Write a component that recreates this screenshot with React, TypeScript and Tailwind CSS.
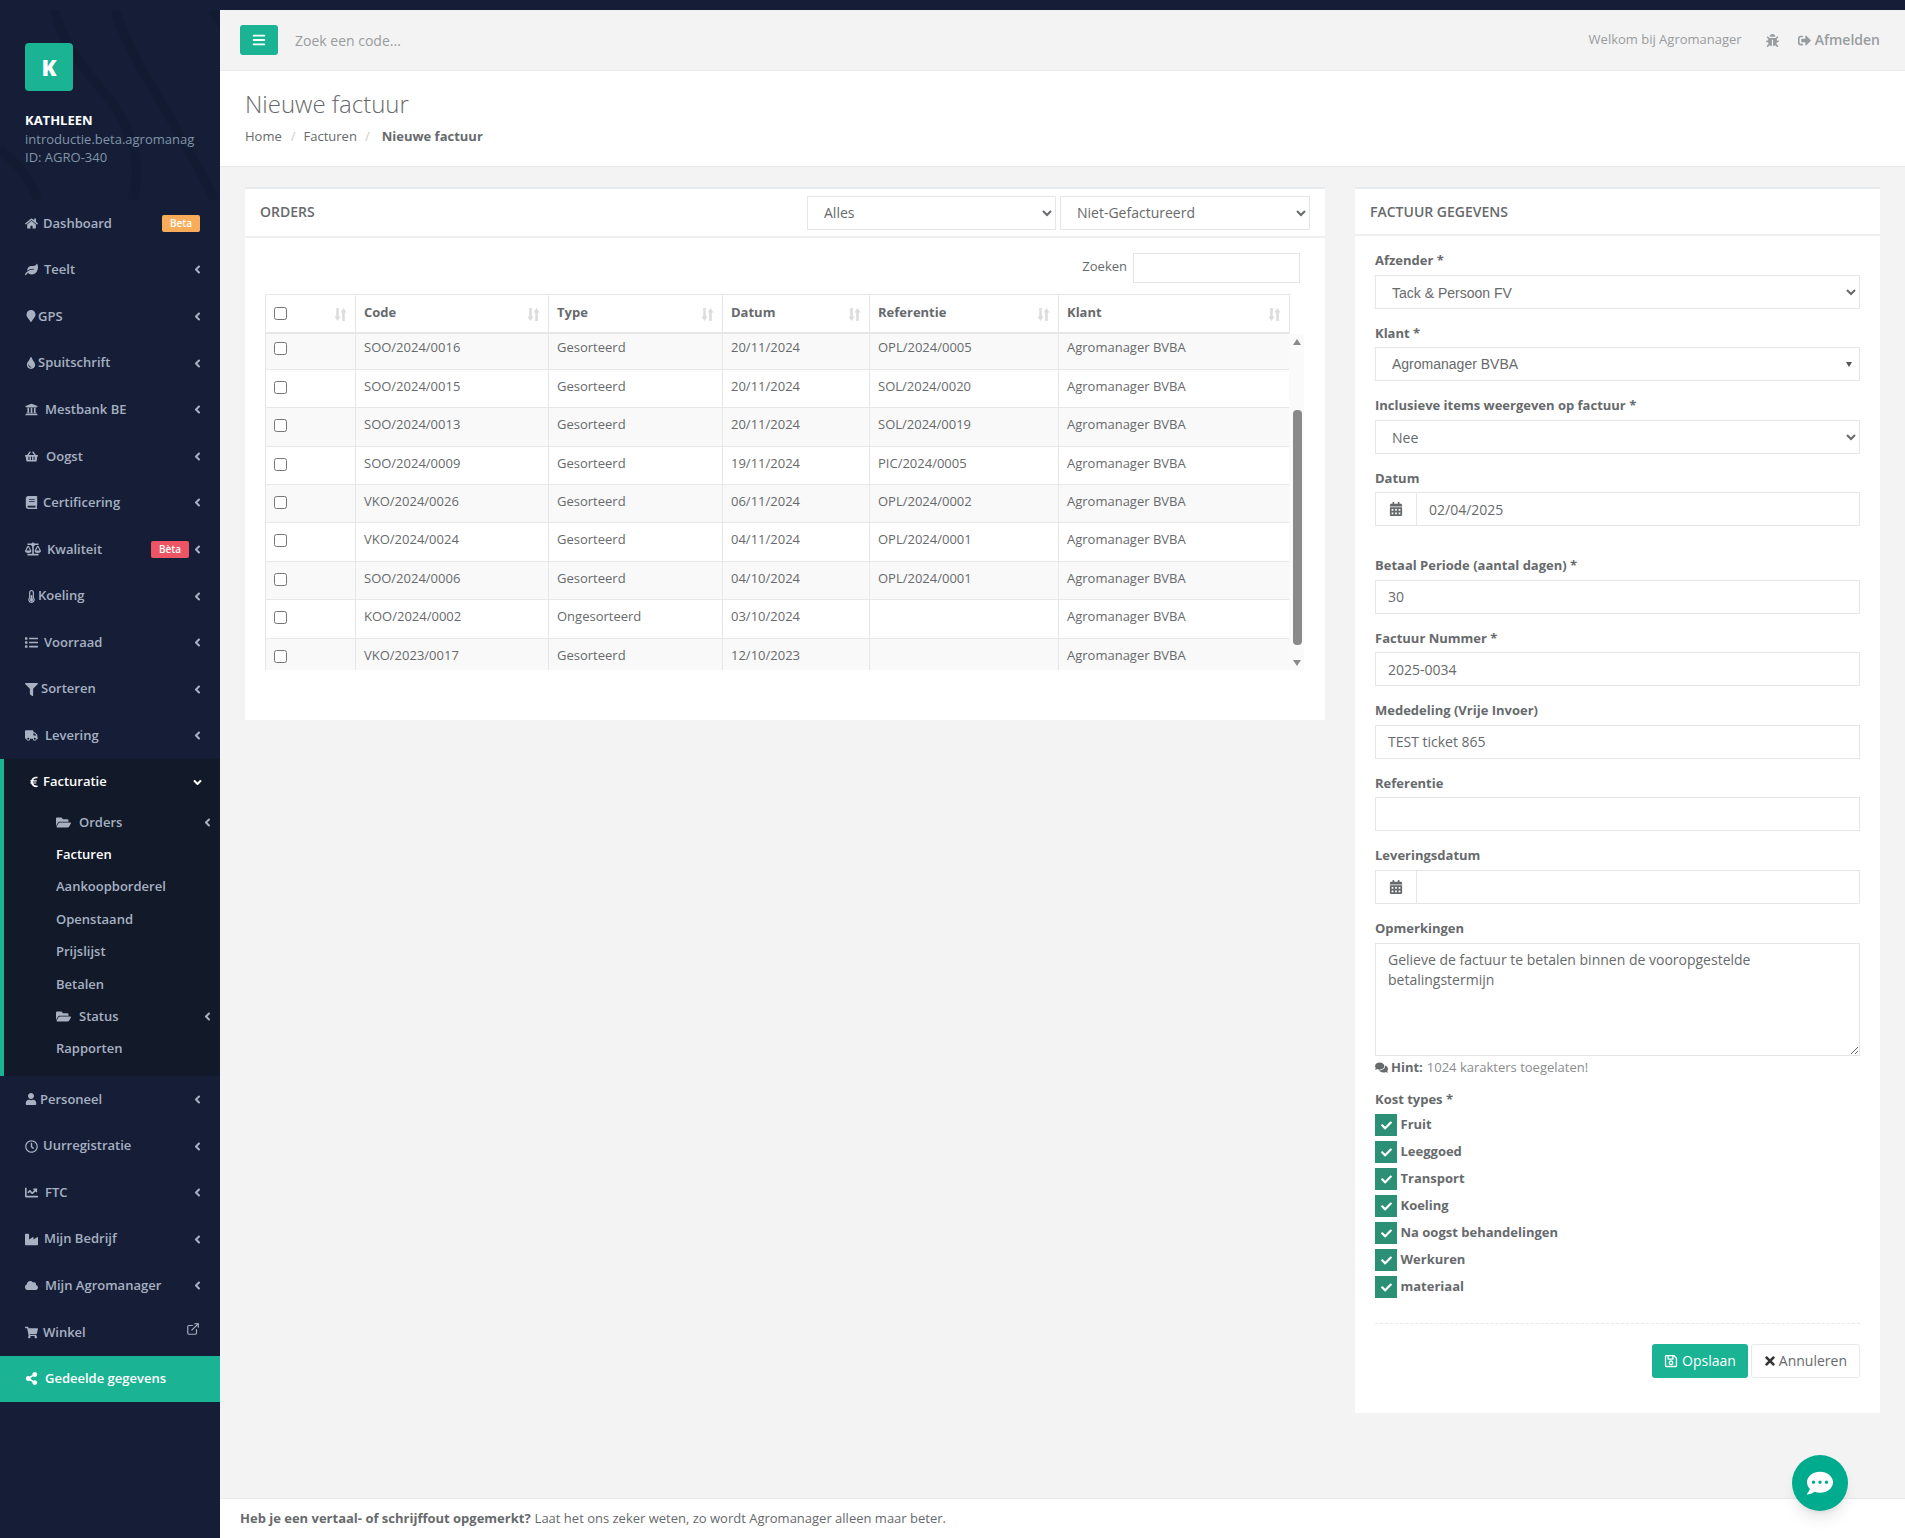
import type { ReactNode } from 'react'
import {
  FaAngleDown,
  FaAngleLeft,
  FaBalanceScale,
  FaBars,
  FaBook,
  FaBug,
  FaCalendarAlt,
  FaCheck,
  FaChartLine,
  FaCloud,
  FaCommentDots,
  FaComments,
  FaEuroSign,
  FaFilter,
  FaFolderOpen,
  FaHome,
  FaIndustry,
  FaLeaf,
  FaList,
  FaMapMarker,
  FaRegClock,
  FaRegSave,
  FaShareAlt,
  FaShoppingBasket,
  FaShoppingCart,
  FaSignOutAlt,
  FaThermometerHalf,
  FaTimes,
  FaTint,
  FaTruck,
  FaUniversity,
  FaUser,
} from 'react-icons/fa'
import { FiExternalLink } from 'react-icons/fi'

// slot = room for the icon, the labels in the menu do not line up
const menuTop = [
  { label: 'Teelt', slot: 'w-[19px]', icon: <FaLeaf /> },
  { label: 'GPS', slot: 'w-[13px]', icon: <FaMapMarker className="text-[12px]" /> },
  { label: 'Spuitschrift', slot: 'w-[13px]', icon: <FaTint className="text-[12px]" /> },
  { label: 'Mestbank BE', slot: 'w-[20px]', icon: <FaUniversity /> },
  { label: 'Oogst', slot: 'w-[21px]', icon: <FaShoppingBasket /> },
  { label: 'Certificering', slot: 'w-[18px]', icon: <FaBook /> },
]

const menuMid = [
  { label: 'Koeling', slot: 'w-[13px]', icon: <FaThermometerHalf /> },
  { label: 'Voorraad', slot: 'w-[19px]', icon: <FaList /> },
  { label: 'Sorteren', slot: 'w-[16px]', icon: <FaFilter /> },
  { label: 'Levering', slot: 'w-[20px]', icon: <FaTruck /> },
]

const menuBottom = [
  { label: 'Personeel', slot: 'w-[15px]', icon: <FaUser className="text-[12px]" /> },
  { label: 'Uurregistratie', slot: 'w-[18px]', icon: <FaRegClock /> },
  { label: 'FTC', slot: 'w-[20px]', icon: <FaChartLine /> },
  { label: 'Mijn Bedrijf', slot: 'w-[19px]', icon: <FaIndustry /> },
  { label: 'Mijn Agromanager', slot: 'w-[20px]', icon: <FaCloud /> },
]

const orders = [
  ['SOO/2024/0016', 'Gesorteerd', '20/11/2024', 'OPL/2024/0005'],
  ['SOO/2024/0015', 'Gesorteerd', '20/11/2024', 'SOL/2024/0020'],
  ['SOO/2024/0013', 'Gesorteerd', '20/11/2024', 'SOL/2024/0019'],
  ['SOO/2024/0009', 'Gesorteerd', '19/11/2024', 'PIC/2024/0005'],
  ['VKO/2024/0026', 'Gesorteerd', '06/11/2024', 'OPL/2024/0002'],
  ['VKO/2024/0024', 'Gesorteerd', '04/11/2024', 'OPL/2024/0001'],
  ['SOO/2024/0006', 'Gesorteerd', '04/10/2024', 'OPL/2024/0001'],
  ['KOO/2024/0002', 'Ongesorteerd', '03/10/2024', ''],
  ['VKO/2023/0017', 'Gesorteerd', '12/10/2023', ''],
]

const kostTypes = ['Fruit', 'Leeggoed', 'Transport', 'Koeling', 'Na oogst behandelingen', 'Werkuren', 'materiaal']

function NavItem({ icon, label, slot, badge, noAngle }: { icon: ReactNode; label: string; slot: string; badge?: ReactNode; noAngle?: boolean }) {
  return (
    <div className="flex h-[46.6px] items-center pl-[25px] pr-[16px] text-[13px] font-semibold text-[#a7b1c2]">
      <span className={`${slot} shrink-0 text-[13px]`}>{icon}</span>
      <span>{label}</span>
      {badge}
      {!noAngle && <FaAngleLeft className={`${badge ? 'ml-[2px]' : 'ml-auto'} text-[13px]`} />}
    </div>
  )
}

function SubItem({ label, folder, active }: { label: string; folder?: boolean; active?: boolean }) {
  return (
    <div className={`flex h-[32.4px] items-center pl-[52px] pr-[6px] text-[13px] font-semibold ${active ? 'text-white' : 'text-[#a7b1c2]'}`}>
      {folder && <FaFolderOpen className="mr-[8px] text-[15px]" />}
      <span>{label}</span>
      {folder && <FaAngleLeft className="ml-auto text-[13px]" />}
    </div>
  )
}

function Sidebar() {
  return (
    <aside className="w-[220px] shrink-0 bg-[#161e37]">
      <div className="relative h-[200px] overflow-hidden pl-[25px] pt-[43px]">
        <svg className="absolute left-0 top-[10px] h-[190px] w-[220px]" viewBox="0 0 220 190" fill="none" stroke="#131b33" strokeWidth="9">
          <path d="M55 0 C 65 50, 110 80, 125 115 C 140 150, 138 170, 132 190" />
          <path d="M115 0 C 130 50, 170 100, 215 190" />
          <path d="M212 0 L 225 18" />
          <path d="M0 140 C 20 155, 30 170, 38 190" />
        </svg>
        <div className="relative">
          <div className="flex h-[48px] w-[48px] items-center justify-center rounded-[4px] bg-[#1ab394] text-[22px] font-extrabold text-white">K</div>
          <div className="mt-[20px] text-[13px] font-bold leading-[19px] text-white">KATHLEEN</div>
          <div className="whitespace-nowrap text-[13px] leading-[18px] text-[#8095a8]">introductie.beta.agromanag</div>
          <div className="text-[13px] leading-[18px] text-[#8095a8]">ID: AGRO-340</div>
        </div>
      </div>
      <NavItem
        icon={<FaHome />}
        slot="w-[18px]"
        label="Dashboard"
        noAngle
        badge={<span className="ml-auto mr-[4px] rounded-[2px] bg-[#f8ac59] px-[8px] py-[1px] text-[10px] font-semibold text-white">Beta</span>}
      />
      {menuTop.map((item) => (
        <NavItem key={item.label} icon={item.icon} slot={item.slot} label={item.label} />
      ))}
      <NavItem
        icon={<FaBalanceScale className="text-[16px]" />}
        slot="w-[22px]"
        label="Kwaliteit"
        badge={<span className="ml-auto rounded-[2px] bg-[#ed5565] px-[8px] py-[1px] text-[10px] font-semibold text-white">Bèta</span>}
      />
      {menuMid.map((item) => (
        <NavItem key={item.label} icon={item.icon} slot={item.slot} label={item.label} />
      ))}
      {/* Facturatie block, open */}
      <div className="h-[317px] border-l-4 border-[#1ab394] bg-[#121929]">
        <div className="flex h-[46px] items-center pl-[24px] pr-[16px] text-[13px] font-semibold text-white">
          <span className="w-[15px] shrink-0">
            <FaEuroSign className="text-[12px]" />
          </span>
          <span>Facturatie</span>
          <FaAngleDown className="ml-auto text-[13px]" />
        </div>
        <div className="pt-[1px]">
          <SubItem label="Orders" folder />
          <SubItem label="Facturen" active />
          <SubItem label="Aankoopborderel" />
          <SubItem label="Openstaand" />
          <SubItem label="Prijslijst" />
          <SubItem label="Betalen" />
          <SubItem label="Status" folder />
          <SubItem label="Rapporten" />
        </div>
      </div>
      {menuBottom.map((item) => (
        <NavItem key={item.label} icon={item.icon} slot={item.slot} label={item.label} />
      ))}
      <div className="flex h-[46.6px] items-center pl-[25px] pr-[20px] text-[13px] font-semibold text-[#a7b1c2]">
        <FaShoppingCart className="mr-[5px]" />
        <span>Winkel</span>
        <FiExternalLink className="mb-[6px] ml-auto text-[14px]" />
      </div>
      <div className="flex h-[46px] items-center bg-[#1ab394] pl-[25px] text-[13px] font-semibold text-white">
        <span className="w-[20px] shrink-0">
          <FaShareAlt />
        </span>
        <span>Gedeelde gegevens</span>
      </div>
    </aside>
  )
}

function SortIcon() {
  return (
    <svg className="ml-auto mt-[2px] shrink-0" width="13" height="15" viewBox="0 0 13 15" fill="#dcdcdc">
      <path d="M2.2 1h2.6v8.5h1.7L3.5 14 .5 9.5h1.7z" />
      <path d="M8.2 14h2.6V5.5h1.7L9.5 1 6.5 5.5h1.7z" />
    </svg>
  )
}

function OrdersCard() {
  const headers = ['Code', 'Type', 'Datum', 'Referentie', 'Klant']
  const colWidths = ['w-[193px]', 'w-[174px]', 'w-[147px]', 'w-[189px]', 'w-[231px]']

  return (
    <section className="h-[533px] w-[1080px] shrink-0 border-t-2 border-[#e7eaec] bg-white">
      <div className="flex h-[49px] items-center border-b-2 border-[#eef0f2] pl-[15px] pr-[15px]">
        <h2 className="mb-[2px] text-[14px] font-semibold text-[#676a6c]">ORDERS</h2>
        <div className="ml-auto flex gap-[4px]">
          <select className="h-[34px] w-[249px] border border-[#e5e6e7] bg-white px-[12px] text-[14px] text-[#676a6c]">
            <option>Alles</option>
          </select>
          <select className="h-[34px] w-[250px] border border-[#e5e6e7] bg-white px-[12px] text-[14px] text-[#676a6c]">
            <option>Niet-Gefactureerd</option>
          </select>
        </div>
      </div>
      <div className="flex items-center justify-end pr-[25px] pt-[15px]">
        <span className="mb-[3px] mr-[6px] text-[13px] text-[#676a6c]">Zoeken</span>
        <input className="h-[30px] w-[167px] border border-[#e5e6e7] bg-white" />
      </div>
      <div className="ml-[20px] mt-[11px] w-[1039px]">
        <table className="w-[1024px] table-fixed border-collapse text-[13px] text-[#676a6c]">
          <thead>
            <tr className="h-[38px]">
              <th className="w-[90px] border border-[#e7e7e7] border-b-2 px-[8px]">
                <div className="flex items-center">
                  <input type="checkbox" className="h-[13px] w-[13px]" />
                  <SortIcon />
                </div>
              </th>
              {headers.map((header, i) => (
                <th key={header} className={`${colWidths[i]} border border-[#e7e7e7] border-b-2 px-[8px] text-left font-bold`}>
                  <div className="flex items-center">
                    <span className="mb-[2px]">{header}</span>
                    <SortIcon />
                  </div>
                </th>
              ))}
            </tr>
          </thead>
        </table>
        <div className="relative h-[336px] overflow-hidden">
          <table className="-mt-[3px] w-[1024px] table-fixed border-collapse text-[13px] text-[#676a6c]">
            <tbody>
              {orders.map((row, r) => (
                <tr key={row[0]} className={`h-[38.4px] ${r % 2 === 0 ? 'bg-[#f9f9f9]' : 'bg-white'}`}>
                  <td className="w-[90px] border border-[#e7e7e7] px-[8px]">
                    <input type="checkbox" className="mt-[3px] h-[13px] w-[13px]" />
                  </td>
                  <td className="w-[193px] border border-[#e7e7e7] px-[8px] pb-[4px]">{row[0]}</td>
                  <td className="w-[174px] border border-[#e7e7e7] px-[8px] pb-[4px]">{row[1]}</td>
                  <td className="w-[147px] border border-[#e7e7e7] px-[8px] pb-[4px]">{row[2]}</td>
                  <td className="w-[189px] border border-[#e7e7e7] px-[8px] pb-[4px]">{row[3]}</td>
                  <td className="w-[231px] border border-[#e7e7e7] px-[8px] pb-[4px]">Agromanager BVBA</td>
                </tr>
              ))}
            </tbody>
          </table>
          {/* scrollbar of the table body */}
          <div className="absolute right-0 top-0 h-[336px] w-[15px] bg-[#fafafa]">
            <div className="absolute left-[4px] top-[5px] h-0 w-0 border-x-[4.5px] border-b-[6px] border-x-transparent border-b-[#8a8a8a]" />
            <div className="absolute left-[4px] top-[76px] h-[235px] w-[9px] rounded-[4px] bg-[#8a8a8a]" />
            <div className="absolute bottom-[4px] left-[4px] h-0 w-0 border-x-[4.5px] border-t-[6px] border-x-transparent border-t-[#8a8a8a]" />
          </div>
        </div>
      </div>
    </section>
  )
}

function Field({ label, children, className = '' }: { label: string; children: ReactNode; className?: string }) {
  return (
    <div className={`mb-[15px] ${className}`}>
      <label className="mb-[5px] block text-[13px] font-bold leading-[18.5px] text-[#676a6c]">{label}</label>
      {children}
    </div>
  )
}

function TextInput({ value }: { value: string }) {
  return <input readOnly value={value} className="block h-[34px] w-full border border-[#e5e6e7] bg-white px-[12px] text-[14px] text-[#676a6c]" />
}

function DateInput({ value }: { value: string }) {
  return (
    <div className="flex h-[34px] border border-[#e5e6e7] bg-white">
      <span className="flex w-[41px] items-center justify-center border-r border-[#e5e6e7] text-[14px] text-[#676a6c]">
        <FaCalendarAlt />
      </span>
      <input readOnly value={value} className="min-w-0 flex-1 px-[12px] text-[14px] text-[#676a6c]" />
    </div>
  )
}

function FormCard() {
  return (
    <section className="h-[1226px] w-[525px] shrink-0 border-t-2 border-[#e7eaec] bg-white">
      <div className="flex h-[47px] items-center border-b-2 border-[#eef0f2] pl-[15px]">
        <h2 className="text-[14px] font-semibold text-[#676a6c]">FACTUUR GEGEVENS</h2>
      </div>
      <div className="px-[20px] pt-[15px]">
        <Field label="Afzender *">
          <select className="block h-[34px] w-full border border-[#e5e6e7] bg-white px-[12px] pt-[2px] font-['Liberation_Sans',sans-serif] text-[14px] text-[#676a6c]">
            <option>Tack &amp; Persoon FV</option>
          </select>
        </Field>
        <Field label="Klant *">
          <div className="flex h-[34px] items-center border border-[#e5e6e7] bg-white pl-[16px] pr-[7px] font-['Liberation_Sans',sans-serif] text-[14px] text-[#676a6c]">
            Agromanager BVBA
            <span className="ml-auto h-0 w-0 border-x-[3.5px] border-t-[5px] border-x-transparent border-t-[#555]" />
          </div>
        </Field>
        <Field label="Inclusieve items weergeven op factuur *">
          <select className="block h-[34px] w-full border border-[#e5e6e7] bg-white px-[12px] pt-[2px] text-[14px] text-[#676a6c]">
            <option>Nee</option>
          </select>
        </Field>
        <Field label="Datum" className="!mb-[30px]">
          <DateInput value="02/04/2025" />
        </Field>
        <Field label="Betaal Periode (aantal dagen) *">
          <TextInput value="30" />
        </Field>
        <Field label="Factuur Nummer *">
          <TextInput value="2025-0034" />
        </Field>
        <Field label="Mededeling (Vrije Invoer)">
          <TextInput value="TEST ticket 865" />
        </Field>
        <Field label="Referentie">
          <TextInput value="" />
        </Field>
        <Field label="Leveringsdatum">
          <DateInput value="" />
        </Field>
        <div>
          <label className="mb-[6px] block text-[13px] font-bold leading-[18.5px] text-[#676a6c]">Opmerkingen</label>
          <textarea
            readOnly
            value="Gelieve de factuur te betalen binnen de vooropgestelde betalingstermijn"
            className="block h-[113px] w-full border border-[#e5e6e7] bg-white px-[12px] py-[6px] text-[14px] leading-[20px] text-[#676a6c]"
          />
        </div>
        <p className="mt-[2px] flex items-center text-[13px] text-[#8a8c8e]">
          <FaComments className="mr-[3px] text-[#676a6c]" />
          <b className="mr-[4px] text-[#676a6c]">Hint:</b> 1024 karakters toegelaten!
        </p>
        <div className="mt-[12px] text-[13px] font-bold leading-[18.5px] text-[#676a6c]">Kost types *</div>
        <div className="mt-[6px] flex flex-col gap-[5px]">
          {kostTypes.map((type) => (
            <div key={type} className="flex h-[22px] items-center text-[13px] font-bold text-[#676a6c]">
              <span className="mr-[3.5px] flex h-[22px] w-[22px] items-center justify-center bg-[#2c9076] text-[11px] text-white">
                <FaCheck />
              </span>
              {type}
            </div>
          ))}
        </div>
        <div className="mt-[25px] border-t border-dashed border-[#e7eaec]" />
        <div className="mt-[20px] flex justify-end gap-[3px]">
          <button className="flex h-[34px] items-center rounded-[3px] bg-[#1ab394] px-[12px] pb-[1px] text-[14px] text-white">
            <FaRegSave className="mr-[4px]" />
            Opslaan
          </button>
          <button className="flex h-[34px] items-center rounded-[3px] border border-[#e7eaec] bg-white pb-[1px] pl-[11px] pr-[12px] text-[14px] text-[#676a6c]">
            <FaTimes className="mr-[2px] text-[#333]" />
            Annuleren
          </button>
        </div>
      </div>
    </section>
  )
}

export default function App() {
  return (
    <div className="relative flex h-[1538px] overflow-hidden bg-[#161e37] font-['Open_Sans',sans-serif]">
      <Sidebar />
      <main className="mt-[10px] flex min-w-0 flex-1 flex-col bg-[#f3f3f4]">
        <header className="flex h-[61px] shrink-0 items-center border-b border-[#e7eaec] pl-[20px] pr-[25px] text-[#999c9e]">
          <button className="flex h-[30px] w-[38px] items-center justify-center rounded-[3px] bg-[#1ab394] text-[14px] text-white">
            <FaBars />
          </button>
          <span className="ml-[17px] text-[14px]">Zoek een code...</span>
          <span className="ml-auto text-[13px]">Welkom bij Agromanager</span>
          <FaBug className="ml-[24px] mr-[1px] text-[13px]" />
          <FaSignOutAlt className="ml-[18px] text-[13px]" />
          <span className="ml-[4px] mb-[1px] text-[14px] font-semibold">Afmelden</span>
        </header>
        <div className="h-[96px] shrink-0 border-b border-[#e7eaec] bg-white pl-[25px] pt-[18px]">
          <h1 className="text-[24px] font-light leading-[30px] text-[#676a6c]">Nieuwe factuur</h1>
          <div className="mt-[8px] flex text-[13px] text-[#676a6c]">
            <span>Home</span>
            <span className="mx-[9px] text-[#ccc]">/</span>
            <span className="-ml-[1px]">Facturen</span>
            <span className="mx-[8px] text-[#ccc]">/</span>
            <strong className="ml-[4px]">Nieuwe factuur</strong>
          </div>
        </div>
        <div className="flex items-start gap-[30px] pl-[25px] pt-[20px]">
          <OrdersCard />
          <FormCard />
        </div>
        <footer className="mt-auto flex h-[40px] shrink-0 items-center border-t border-[#e7eaec] bg-white pl-[20px] text-[13px] text-[#676a6c]">
          <b className="mr-[4px]">Heb je een vertaal- of schrijffout opgemerkt?</b> Laat het ons zeker weten, zo wordt Agromanager alleen maar beter.
        </footer>
      </main>
      <button className="absolute left-[1792px] top-[1455px] flex h-[56px] w-[56px] items-center justify-center rounded-full bg-[#00ab8e] text-[26px] text-white shadow-lg">
        <FaCommentDots />
      </button>
    </div>
  )
}
